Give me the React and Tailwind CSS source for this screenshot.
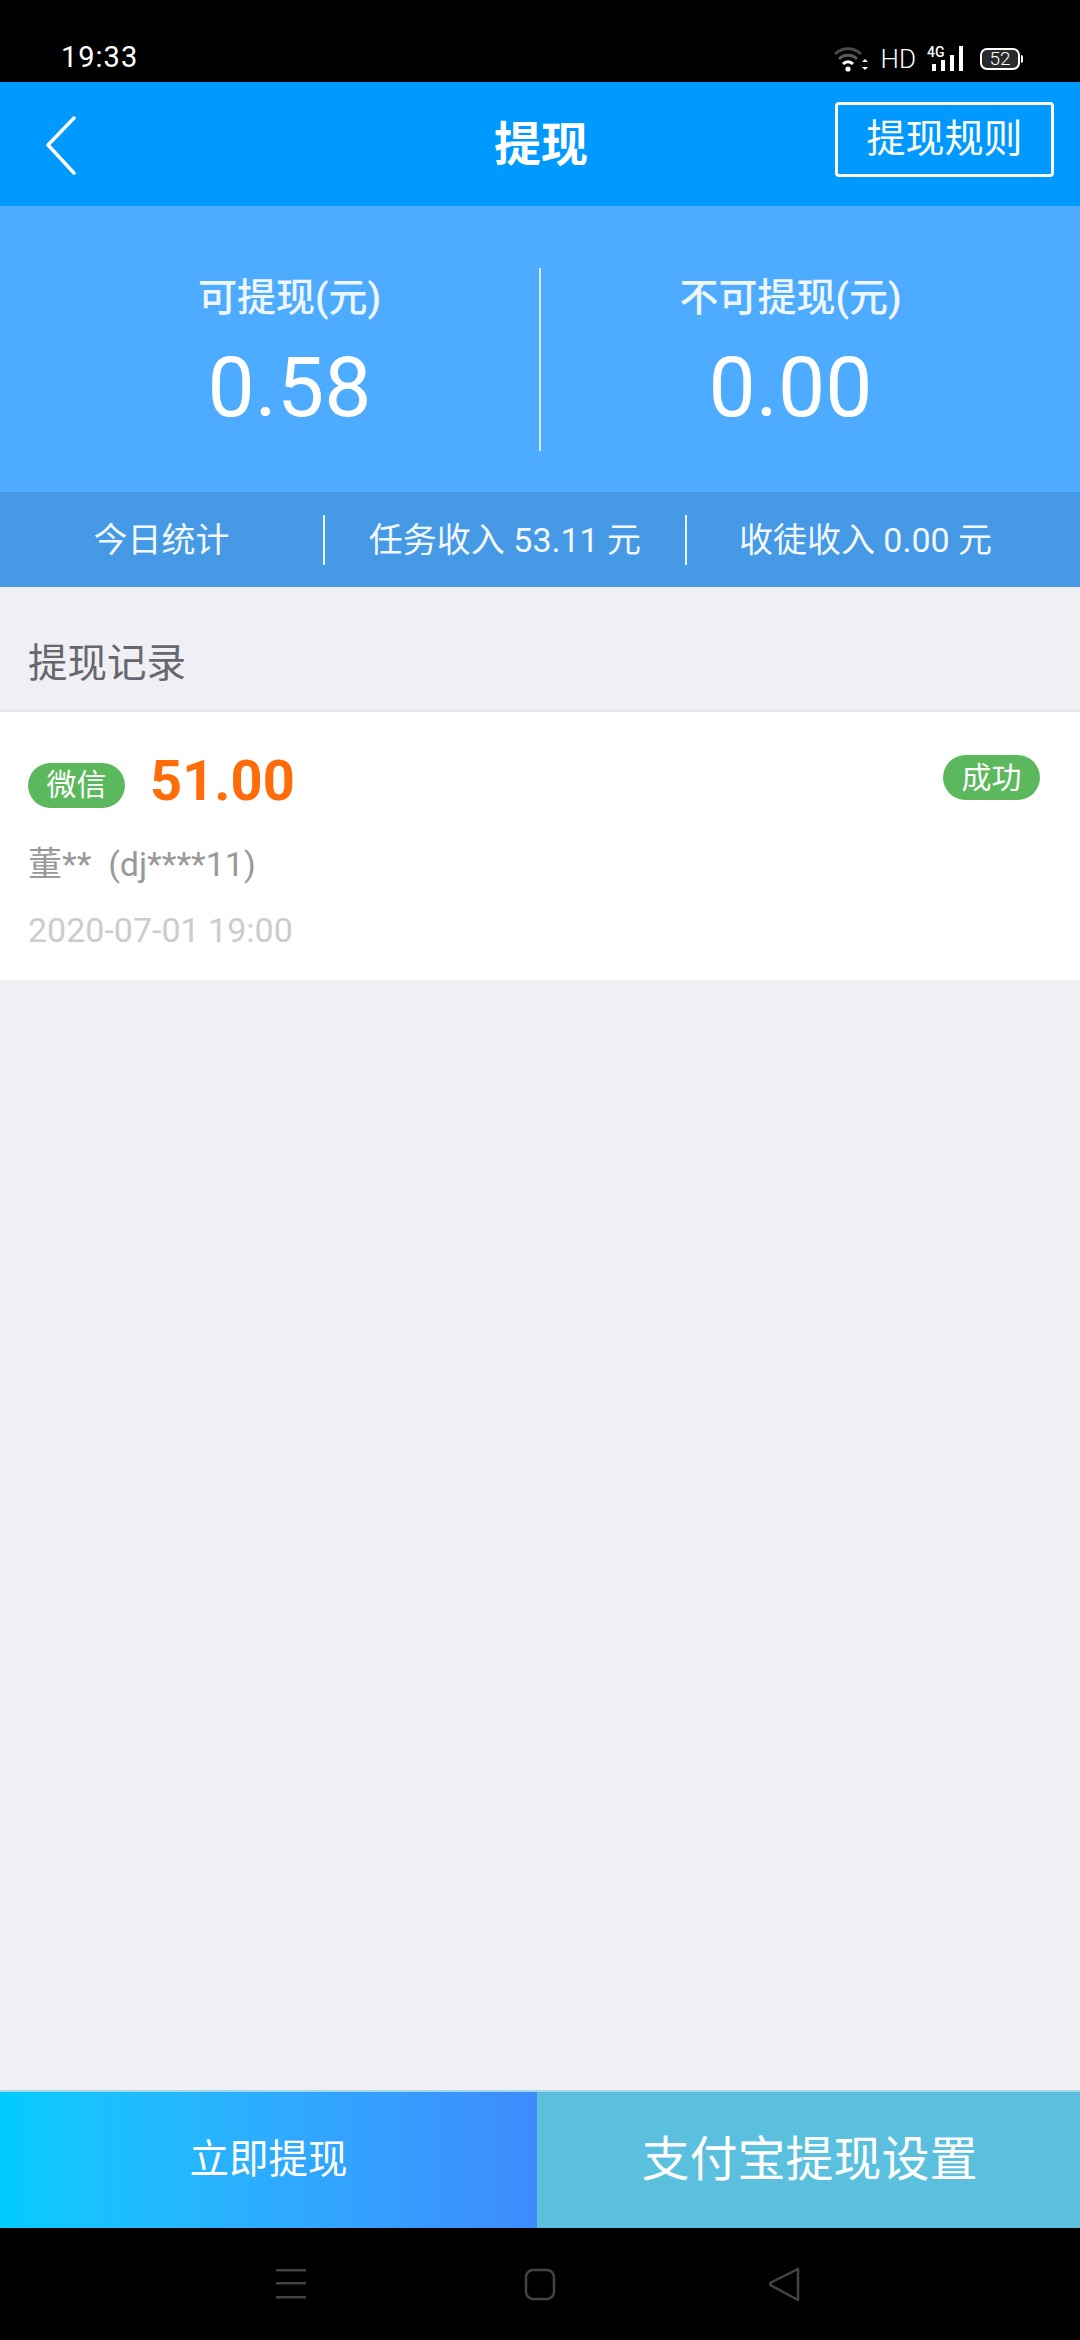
import React from "react";

const font = "font-['Roboto','Noto_Sans_CJK_SC',sans-serif]";

function StatusIcons() {
  return (
    <div className="flex items-center text-white">
      <svg width="36" height="27" viewBox="0 0 36 27" fill="none">
        <path d="M1 9C8 2 20 2 27 9" stroke="#4a4a4a" strokeWidth="3" />
        <path d="M5 14C10 9 18 9 23 14" stroke="#5a5a5a" strokeWidth="3" />
        <path d="M9 19C12 16 16 16 19 19" stroke="#fff" strokeWidth="3" />
        <circle cx="14" cy="24" r="2.6" fill="#fff" />
        <path d="M28 17l3-3 3 3zM28 22l3 3 3-3z" fill="#fff" />
      </svg>
      <span className="ml-[11px] text-[26px] leading-none font-['Roboto'] font-light">HD</span>
      <svg width="40" height="27" viewBox="0 0 40 27" fill="#fff" className="ml-[11px]">
        <text x="0" y="12" fontSize="14" fontFamily="Roboto" fontWeight="500">4G</text>
        <rect x="5" y="19" width="4" height="7" />
        <rect x="14" y="15" width="4" height="11" />
        <rect x="23" y="10" width="4" height="16" />
        <rect x="32" y="1" width="4" height="25" />
      </svg>
      <div className="relative ml-[13px] flex h-[22px] w-[40px] items-center justify-center rounded-[7px] border-2 border-white bg-[#2a2a2a] text-[19px] leading-none font-['Roboto'] font-light">
        52
        <span className="absolute right-[-5px] top-[5px] h-[8px] w-[2px] rounded-r-sm bg-white" />
      </div>
    </div>
  );
}

function Stat({ label, value, className }) {
  return (
    <div className={`flex flex-1 flex-col items-center pt-[6px] ${className}`}>
      <div className="text-[39px] leading-[48px] font-medium text-[#eef6ff]">{label}</div>
      <div className="mt-[21px] text-[84px] leading-[90px]">{value}</div>
    </div>
  );
}

export default function App() {
  return (
    <div className={`${font} flex h-[2340px] w-[1080px] flex-col bg-[#efeff4]`}>
      <div className="flex h-[82px] items-end justify-between bg-black pb-[10px] pl-[61px] pr-[60px] text-white">
        <span className="text-[29px] leading-[30px] tracking-[1px]">19:33</span>
        <StatusIcons />
      </div>

      <header className="relative flex h-[124px] items-center justify-center bg-[#0099ff] text-white">
        <svg className="absolute left-[45px] top-[34px]" width="32" height="60" viewBox="0 0 32 60" fill="none">
          <path d="M29 2L3 29L29 57" stroke="#fff" strokeWidth="3.5" strokeLinecap="round" strokeLinejoin="round" />
        </svg>
        <h1 className="ml-[2px] text-[47px] font-bold leading-none">提现</h1>
        <button className="absolute right-[26px] top-[20px] h-[75px] w-[219px] rounded-[4px] border-[3px] border-white text-[39px] leading-none">
          提现规则
        </button>
      </header>

      <section className="flex h-[286px] items-start bg-[#4dacff] pt-[62px] text-white">
        <Stat label="可提现(元)" value="0.58" className="pl-[40px]" />
        <div className="h-[183px] w-[2px] bg-[#d6ebff]" />
        <Stat label="不可提现(元)" value="0.00" className="pr-[40px]" />
      </section>

      <section className="flex h-[95px] items-center bg-[#4699e4] text-[34px] leading-none text-[#f2f8ff]">
        <div className="w-[323px] text-center">今日统计</div>
        <div className="h-[50px] w-[2px] bg-[#e6f2fc]" />
        <div className="w-[360px] text-center">任务收入 53.11 元</div>
        <div className="h-[50px] w-[2px] bg-[#e6f2fc]" />
        <div className="flex-1 pr-[36px] text-center">收徒收入 0.00 元</div>
      </section>

      <div className="flex h-[125px] items-center border-b-2 border-[#e6e6ea] px-[28px] pt-[30px] text-[39.5px] leading-none text-[#66666c]">
        提现记录
      </div>

      <article className="relative h-[268px] bg-white px-[28px]">
        <div className="flex items-center pt-[36px]">
          <span className="mt-[8px] flex h-[45px] w-[97px] items-center justify-center rounded-full bg-[#5cb85c] text-[30px] leading-none text-white">
            微信
          </span>
          <span className="ml-[25px] text-[56px] font-bold leading-[66px] text-[#ff6c0a]">51.00</span>
        </div>
        <span className="absolute right-[40px] top-[43px] flex h-[45px] w-[97px] items-center justify-center rounded-full bg-[#5cb85c] text-[30px] leading-none text-white">
          成功
        </span>
        <div className="mt-[28px] text-[34px] leading-[44px] text-[#999999]">董**&nbsp; (dj****11)</div>
        <div className="mt-[24px] text-[34px] leading-[40px] text-[#cccccc]">2020-07-01 19:00</div>
      </article>

      <div className="flex-1" />

      <footer className="flex h-[138px] border-t-2 border-[#a9d8ea] text-white">
        <button className="h-full w-[537px] bg-gradient-to-r from-[#00ccff] to-[#3d8bfd] text-[39.5px] leading-none">
          立即提现
        </button>
        <button className="h-full flex-1 bg-[#5bc0de] pl-[2px] text-[48px] leading-none">支付宝提现设置</button>
      </footer>

      <nav className="relative h-[112px] bg-black">
        <svg className="absolute left-[274px] top-[40px]" width="34" height="34" viewBox="0 0 34 34" fill="#444">
          <rect x="2" y="1" width="30" height="2.5" />
          <rect x="2" y="14" width="30" height="2.5" />
          <rect x="2" y="28" width="30" height="2.5" />
        </svg>
        <svg className="absolute left-[523px] top-[40px]" width="34" height="34" viewBox="0 0 34 34" fill="none">
          <rect x="3" y="2" width="28" height="29" rx="7" stroke="#444" strokeWidth="2.5" />
        </svg>
        <svg className="absolute left-[767px] top-[38px]" width="36" height="36" viewBox="0 0 36 36" fill="none">
          <path d="M31 3L4 16.5Q2.5 18 4 19.5L31 34Z" stroke="#444" strokeWidth="2.5" strokeLinejoin="round" />
        </svg>
      </nav>
    </div>
  );
}
